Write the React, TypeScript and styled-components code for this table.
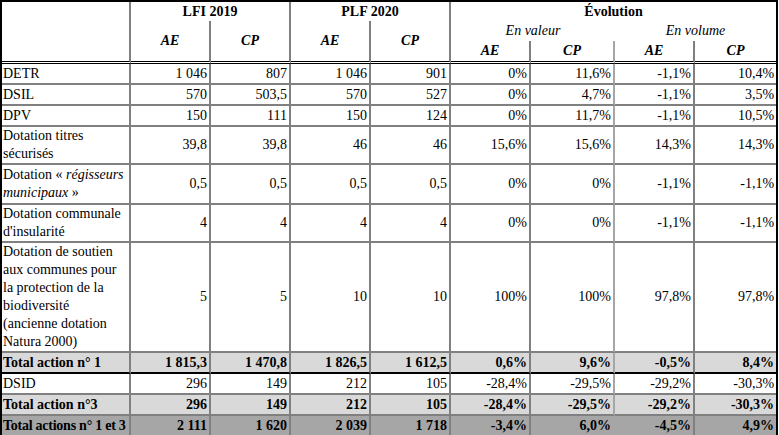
import React from "react";
import styled, { createGlobalStyle, css } from "styled-components";

const GlobalStyle = createGlobalStyle`
  html, body { margin: 0; padding: 0; background: #fff; }
  body { font-family: "Liberation Serif", "Times New Roman", serif; color: #000; }
`;

const GRID = "#808080";
const LIGHT = "#a6a6a6";

const Table = styled.table`
  border-collapse: separate;
  border-spacing: 0;
  table-layout: fixed;
  width: 778px;
  border: 2px solid #000;
  font-family: "Liberation Serif", "Times New Roman", serif;
  font-size: 14px;
  line-height: 18px;
  color: #000;
`;

const Col = styled.col<{ $w: number }>`
  width: ${(p) => p.$w}px;
`;

const Row = styled.tr<{ $h: number; $bg?: string; $bold?: boolean }>`
  height: ${(p) => p.$h}px;
  background: ${(p) => p.$bg ?? "transparent"};
  font-weight: ${(p) => (p.$bold ? 700 : 400)};
`;

type CellProps = {
  $right?: "none" | "light" | "dark";
  $bottom?: "none" | "grid" | "black" | "double";
};

const cellBorders = css<CellProps>`
  box-sizing: border-box;
  border-right: ${(p) =>
    p.$right === "none" ? "none" : `2px solid ${p.$right === "light" ? LIGHT : GRID}`};
  border-bottom: ${(p) =>
    p.$bottom === "none" || p.$bottom === undefined
      ? "none"
      : p.$bottom === "double"
      ? "3px double #000"
      : p.$bottom === "black"
      ? "2px solid #000"
      : `2px solid ${GRID}`};
`;

const HeadCell = styled.th<CellProps & { $italic?: boolean; $weight?: number }>`
  ${cellBorders}
  padding: 0;
  text-align: center;
  vertical-align: middle;
  font-style: ${(p) => (p.$italic ? "italic" : "normal")};
  font-weight: ${(p) => p.$weight ?? 700};
  white-space: nowrap;
`;

const LabelCell = styled.td<CellProps>`
  ${cellBorders}
  padding: 0 0 0 1px;
  text-align: left;
  vertical-align: middle;
  white-space: nowrap;
  overflow: visible;
`;

const NumCell = styled.td<CellProps>`
  ${cellBorders}
  padding: 0 2px 0 0;
  text-align: right;
  vertical-align: middle;
  white-space: nowrap;
`;

const Em = styled.i`
  font-style: italic;
`;

const TightLabel = styled.span`
  letter-spacing: -0.25px;
`;

type DataRow = {
  label: React.ReactNode;
  values: string[];
  h: number;
  bg?: string;
  bold?: boolean;
  bottom: "none" | "grid" | "black";
};

const nb = (s: string) => s.replace(/ /g, "\u00a0");

const rows: DataRow[] = [
  { label: "DETR", values: ["1 046", "807", "1 046", "901", "0%", "11,6%", "-1,1%", "10,4%"], h: 21, bottom: "grid" },
  { label: "DSIL", values: ["570", "503,5", "570", "527", "0%", "4,7%", "-1,1%", "3,5%"], h: 21, bottom: "grid" },
  { label: "DPV", values: ["150", "111", "150", "124", "0%", "11,7%", "-1,1%", "10,5%"], h: 21, bottom: "grid" },
  {
    label: (
      <>
        Dotation titres
        <br />
        sécurisés
      </>
    ),
    values: ["39,8", "39,8", "46", "46", "15,6%", "15,6%", "14,3%", "14,3%"],
    h: 38,
    bottom: "grid",
  },
  {
    label: (
      <>
        Dotation « <Em>régisseurs</Em>
        <br />
        <Em>municipaux</Em> »
      </>
    ),
    values: ["0,5", "0,5", "0,5", "0,5", "0%", "0%", "-1,1%", "-1,1%"],
    h: 40,
    bottom: "grid",
  },
  {
    label: (
      <>
        Dotation communale
        <br />
        d'insularité
      </>
    ),
    values: ["4", "4", "4", "4", "0%", "0%", "-1,1%", "-1,1%"],
    h: 37,
    bottom: "grid",
  },
  {
    label: (
      <>
        Dotation de soutien
        <br />
        aux communes pour
        <br />
        la protection de la
        <br />
        biodiversité
        <br />
        (ancienne dotation
        <br />
        Natura 2000)
      </>
    ),
    values: ["5", "5", "10", "10", "100%", "100%", "97,8%", "97,8%"],
    h: 109,
    bottom: "grid",
  },
  {
    label: "Total action n° 1",
    values: ["1 815,3", "1 470,8", "1 826,5", "1 612,5", "0,6%", "9,6%", "-0,5%", "8,4%"],
    h: 21,
    bg: "#d9d9d9",
    bold: true,
    bottom: "black",
  },
  { label: "DSID", values: ["296", "149", "212", "105", "-28,4%", "-29,5%", "-29,2%", "-30,3%"], h: 21, bottom: "grid" },
  {
    label: "Total action n°3",
    values: ["296", "149", "212", "105", "-28,4%", "-29,5%", "-29,2%", "-30,3%"],
    h: 21,
    bg: "#d9d9d9",
    bold: true,
    bottom: "grid",
  },
  {
    label: <TightLabel>Total actions n° 1 et 3</TightLabel>,
    values: ["2 111", "1 620", "2 039", "1 718", "-3,4%", "6,0%", "-4,5%", "4,9%"],
    h: 19,
    bg: "#a6a6a6",
    bold: true,
    bottom: "none",
  },
];

const rightFor = (i: number): "none" | "light" | "dark" =>
  i === 7 ? "none" : i === 5 || i === 7 ? "light" : "dark";

export default function App() {
  return (
    <>
      <GlobalStyle />
      <Table>
        <colgroup>
          <Col $w={129} />
          <Col $w={80} />
          <Col $w={80} />
          <Col $w={80} />
          <Col $w={80} />
          <Col $w={80} />
          <Col $w={84} />
          <Col $w={80} />
          <Col $w={81} />
        </colgroup>
        <thead>
          <Row $h={19}>
            <HeadCell rowSpan={3} $bottom="double" />
            <HeadCell colSpan={2}>LFI 2019</HeadCell>
            <HeadCell colSpan={2}>PLF 2020</HeadCell>
            <HeadCell colSpan={4} $right="none">
              Évolution
            </HeadCell>
          </Row>
          <Row $h={20}>
            <HeadCell rowSpan={2} $italic $bottom="double">AE</HeadCell>
            <HeadCell rowSpan={2} $italic $bottom="double">CP</HeadCell>
            <HeadCell rowSpan={2} $italic $bottom="double">AE</HeadCell>
            <HeadCell rowSpan={2} $italic $bottom="double">CP</HeadCell>
            <HeadCell colSpan={2} $italic $weight={400} $right="none">
              En valeur
            </HeadCell>
            <HeadCell colSpan={2} $italic $weight={400} $right="none">
              En volume
            </HeadCell>
          </Row>
          <Row $h={23}>
            <HeadCell $italic $bottom="double">AE</HeadCell>
            <HeadCell $italic $bottom="double" $right="light">CP</HeadCell>
            <HeadCell $italic $bottom="double">AE</HeadCell>
            <HeadCell $italic $bottom="double" $right="none">CP</HeadCell>
          </Row>
        </thead>
        <tbody>
          {rows.map((r, ri) => (
            <Row key={ri} $h={r.h} $bg={r.bg} $bold={r.bold}>
              <LabelCell $bottom={r.bottom}>{r.label}</LabelCell>
              {r.values.map((v, i) => (
                <NumCell key={i} $bottom={r.bottom} $right={i === 7 ? "none" : i === 5 ? "light" : i === 6 ? "dark" : "dark"}>
                  {nb(v)}
                </NumCell>
              ))}
            </Row>
          ))}
        </tbody>
      </Table>
    </>
  );
}

export { rightFor };
